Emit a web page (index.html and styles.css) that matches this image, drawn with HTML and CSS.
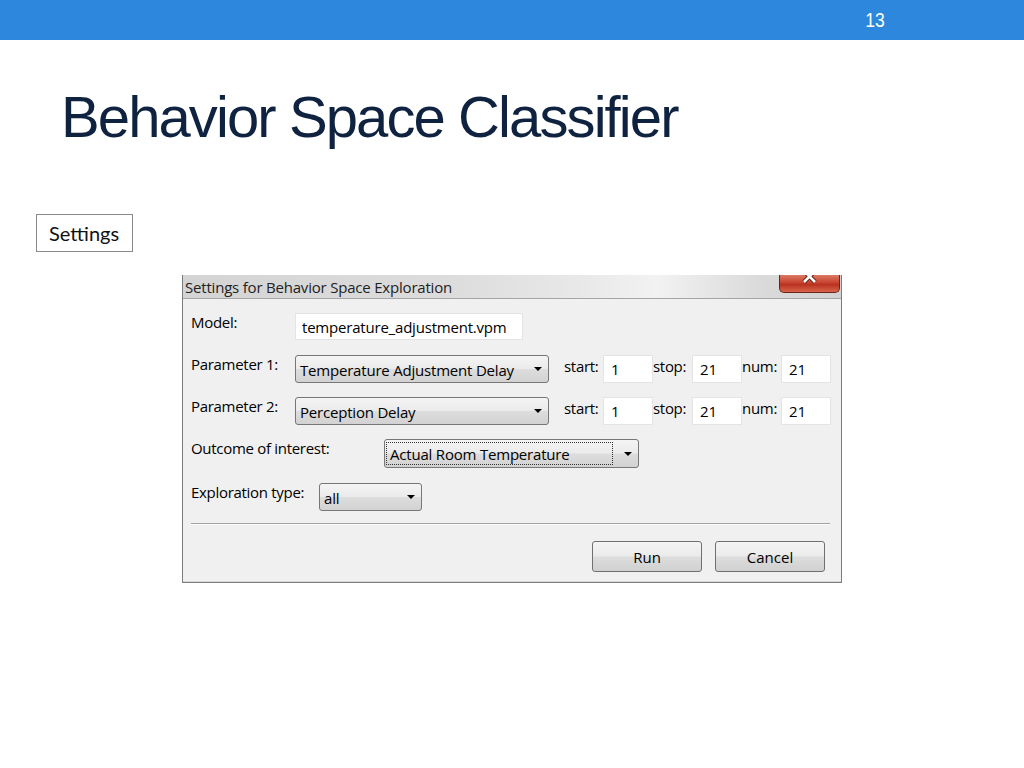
FILE: index.html
```html
<!DOCTYPE html>
<html lang="en">
<head>
    <meta charset="UTF-8">
    <title>Behavior Space Classifier</title>
    <link rel="stylesheet" href="styles.css">
</head>
<body>
    <div class="topbar">
        <span class="page-num">13</span>
    </div>

    <h1 class="slide-title">Behavior Space Classifier</h1>

    <div class="tag">Settings</div>

    <div class="dialog">
        <div class="titlebar">
            <span class="titlebar-text">Settings for Behavior Space Exploration</span>
            <div class="close-btn">
                <svg width="16" height="9" viewBox="0 0 16 9">
                    <path d="M2 -4 L13 7 M13 -4 L2 7" stroke="#5a1a10" stroke-width="4.5"/>
                    <path d="M2 -4 L13 7 M13 -4 L2 7" stroke="#fff" stroke-width="2.6"/>
                </svg>
            </div>
        </div>

        <div class="panel">
            <div class="row row-model">
                <label class="lbl lbl-wide">Model:</label>
                <div class="field field-model">temperature_adjustment.vpm</div>
            </div>

            <div class="row">
                <label class="lbl lbl-wide">Parameter 1:</label>
                <div class="combo combo-param">
                    <span class="combo-text">Temperature Adjustment Delay</span>
                    <span class="arrow"></span>
                </div>
                <label class="lbl lbl-small lbl-start">start:</label>
                <div class="field field-num">1</div>
                <label class="lbl lbl-small">stop:</label>
                <div class="field field-num">21</div>
                <label class="lbl lbl-small">num:</label>
                <div class="field field-num">21</div>
            </div>

            <div class="row">
                <label class="lbl lbl-wide">Parameter 2:</label>
                <div class="combo combo-param">
                    <span class="combo-text">Perception Delay</span>
                    <span class="arrow"></span>
                </div>
                <label class="lbl lbl-small lbl-start">start:</label>
                <div class="field field-num">1</div>
                <label class="lbl lbl-small">stop:</label>
                <div class="field field-num">21</div>
                <label class="lbl lbl-small">num:</label>
                <div class="field field-num">21</div>
            </div>

            <div class="row row-outcome">
                <label class="lbl lbl-outcome">Outcome of interest:</label>
                <div class="combo combo-outcome">
                    <span class="combo-text focus">Actual Room Temperature</span>
                    <span class="arrow"></span>
                </div>
            </div>

            <div class="row row-type">
                <label class="lbl lbl-type">Exploration type:</label>
                <div class="combo combo-type">
                    <span class="combo-text">all</span>
                    <span class="arrow"></span>
                </div>
            </div>

            <div class="separator"></div>

            <div class="buttons">
                <button class="btn">Run</button>
                <button class="btn">Cancel</button>
            </div>
        </div>
    </div>
</body>
</html>
```

FILE: styles.css
```css
body {
    margin: 0;
    background-color: #fff;
    font-family: "Liberation Sans", Arial, sans-serif;
}

.topbar {
    height: 40px;
    background-color: #2d87dc;
    display: flex;
    justify-content: flex-end;
    align-items: center;
    padding-right: 138px;
}

.page-num {
    display: inline-block;
    color: #fff;
    font-size: 20px;
    transform: scaleX(0.88);
}

.slide-title {
    margin: 48px 0 0 61px;
    font-size: 58px;
    line-height: 58px;
    font-weight: normal;
    letter-spacing: -1.9px;
    color: #0f2341;
}

.tag {
    margin: 68px 0 0 36px;
    width: 97px;
    height: 38px;
    box-sizing: border-box;
    border: 1px solid #8a8a8a;
    padding-left: 12px;
    display: flex;
    align-items: center;
    font-family: Lato, sans-serif;
    font-size: 20px;
    color: #111;
}

/* dialog window */
.dialog {
    position: relative;
    margin: 23px 0 0 182px;
    width: 660px;
    box-sizing: border-box;
    border: 1px solid #7c7c7c;
    border-top: none;
    background-color: #d9d9d9;
    font-family: "Open Sans", sans-serif;
    font-size: 15px;
    color: #000;
}

.titlebar {
    height: 23px;
    display: flex;
    align-items: center;
    padding-left: 2px;
    background: linear-gradient(to right, #d4d4d4 0%, #dcdcdc 40%, #e8e8e8 60%, #f2f2f2 72%, #dadada 88%, #d2d2d2 100%);
}

.titlebar-text {
    color: #222;
    letter-spacing: -0.2px;
}

.close-btn {
    position: absolute;
    top: 0;
    right: 1px;
    width: 61px;
    height: 18px;
    box-sizing: border-box;
    border: 1px solid #6b2418;
    border-top: none;
    border-radius: 0 0 5px 5px;
    background: linear-gradient(to bottom, #dc7a64 0%, #c8432f 45%, #b83220 55%, #d9634a 100%);
    display: flex;
    justify-content: center;
    align-items: flex-start;
}

.panel {
    border-top: 1px solid #a6a6a6;
    margin: 0 0 1px 0;
    background-color: #f0f0f0;
    padding: 14px 10px 9px 8px;
}

.row {
    display: flex;
    align-items: flex-start;
    height: 28px;
    margin-bottom: 14px;
}

.row-model {
    height: 27px;
    margin-bottom: 15px;
}

.row-outcome {
    height: 29px;
    margin-bottom: 15px;
}

.row-type {
    margin-bottom: 12px;
}

.lbl {
    line-height: 18px;
    padding-top: 0;
    flex-shrink: 0;
    letter-spacing: -0.3px;
}

.lbl-wide {
    width: 104px;
}

.lbl-outcome {
    width: 193px;
}

.lbl-type {
    width: 128px;
}

.lbl-small {
    width: 39px;
    padding-top: 2px;
}

.lbl-start {
    margin-left: 15px;
}

.field {
    height: 100%;
    box-sizing: border-box;
    background-color: #fff;
    border: 1px solid #e4e4e4;
    display: flex;
    align-items: center;
    padding-left: 6px;
}

.field-model {
    width: 228px;
    letter-spacing: -0.2px;
}

.field-num {
    width: 50px;
    padding-left: 7px;
}

.combo {
    height: 100%;
    box-sizing: border-box;
    border: 1px solid #777;
    border-radius: 3px;
    background: linear-gradient(to bottom, #f4f4f4 0%, #ebebeb 48%, #dddddd 52%, #d2d2d2 100%);
    display: flex;
    align-items: center;
    padding: 0 6px 0 4px;
}

.combo-text {
    flex: 1;
    padding-top: 2px;
    letter-spacing: -0.2px;
    white-space: nowrap;
}

.combo-text.focus {
    align-self: stretch;
    margin: 2px 7px 2px -3px;
    padding: 0 0 0 3px;
    border: 1px dotted #333;
    display: flex;
    align-items: center;
}

.arrow {
    width: 0;
    height: 0;
    border-left: 4px solid transparent;
    border-right: 4px solid transparent;
    border-top: 4px solid #000;
    margin-left: 4px;
}

.combo-param {
    width: 254px;
}

.combo-outcome {
    width: 255px;
}

.combo-type {
    width: 103px;
}

.separator {
    height: 1px;
    margin-right: 1px;
    background-color: #a0a0a0;
    border-bottom: 1px solid #fff;
    margin-bottom: 16px;
}

.buttons {
    display: flex;
    justify-content: flex-end;
    gap: 13px;
    padding-right: 6px;
}

.btn {
    width: 110px;
    height: 31px;
    border: 1px solid #707070;
    border-radius: 3px;
    background: linear-gradient(to bottom, #f4f4f4 0%, #ebebeb 48%, #dddddd 52%, #d0d0d0 100%);
    font-family: "Open Sans", sans-serif;
    font-size: 15px;
    color: #000;
    padding: 0;
}
```
